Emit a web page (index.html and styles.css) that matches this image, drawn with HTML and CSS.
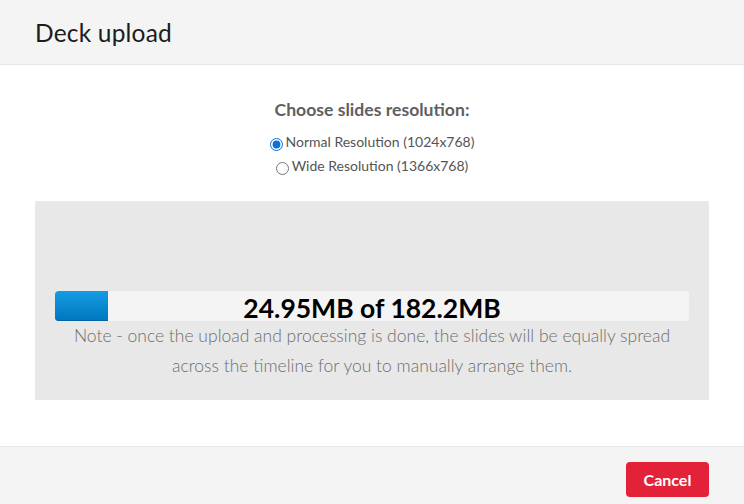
FILE: index.html
```html
<!DOCTYPE html>
<html>
<head>
<meta charset="utf-8">
<link rel="stylesheet" href="styles.css">
</head>
<body>
<div class="modal">
  <div class="header"><h1 class="title">Deck upload</h1></div>
  <div class="body">
    <div class="choose">Choose slides resolution:</div>
    <div class="opts">
      <label class="opt"><input type="radio" name="res" checked>Normal Resolution (1024x768)</label>
      <label class="opt"><input type="radio" name="res">Wide Resolution (1366x768)</label>
    </div>
    <div class="panel">
      <div class="bar">
        <div class="fill" style="width:53px"></div>
        <div class="bartext">24.95MB of 182.2MB</div>
      </div>
      <p class="note">Note - once the upload and processing is done, the slides will be equally spread<br>across the timeline for you to manually arrange them.</p>
    </div>
  </div>
  <div class="footer"><button class="cancel">Cancel</button></div>
</div>
</body>
</html>
```
FILE: styles.css
```css
html, body { margin: 0; padding: 0; }
body { font-family: Lato, "Open Sans", sans-serif; background: #fff; width: 744px; height: 504px; overflow: hidden; }
.modal { display: flex; flex-direction: column; height: 504px; }
.header { height: 64px; background: #f4f4f4; border-bottom: 1px solid #e6e6e6; display: flex; align-items: center; padding-left: 35px; box-sizing: content-box; }
.title { margin: 0; font-size: 24.5px; font-weight: 400; color: #1c1c1c; letter-spacing: 0.2px; }
.body { flex: 1; padding: 34px 35px 0 35px; }
.choose { text-align: center; font-size: 17.6px; font-weight: 700; color: #5f5f5f; line-height: 22px; }
.opts { display: flex; flex-direction: column; align-items: center; margin-top: 9px; }
.opt { font-size: 14px; color: #555; line-height: 24px; height: 24px; }
.opt input { margin: 0 3px 0 0; width: 13px; height: 13px; vertical-align: -4px; accent-color: #0a72d9; }
.panel { background: #e8e8e8; margin-top: 23px; height: 199px; padding: 90px 20px 0 20px; box-sizing: border-box; }
.bar { position: relative; height: 30px; background: #f4f4f4; border-radius: 4px; }
.fill { position: absolute; left: 0; top: 0; bottom: 0; background: linear-gradient(#149ce2, #0076be); border-radius: 4px 0 0 4px; box-shadow: inset 0 -1px 0 #0064a6; }
.bartext { position: relative; text-align: center; font-size: 26.5px; font-weight: 700; color: #000; line-height: 34px; height: 30px; }
.note { margin: 0; text-align: center; font-size: 17.5px; font-weight: 300; color: #6e6e6e; line-height: 30px; }
.footer { height: 58px; background: #f4f4f4; border-top: 1px solid #e8e8e8; display: flex; justify-content: flex-end; align-items: flex-start; padding: 15px 35px 0 0; box-sizing: border-box; }
.cancel { width: 83px; height: 35px; background: #e3223a; color: #fff; border: none; border-radius: 4px; font-family: Lato, sans-serif; font-weight: 700; font-size: 16px; padding: 0; }
```
